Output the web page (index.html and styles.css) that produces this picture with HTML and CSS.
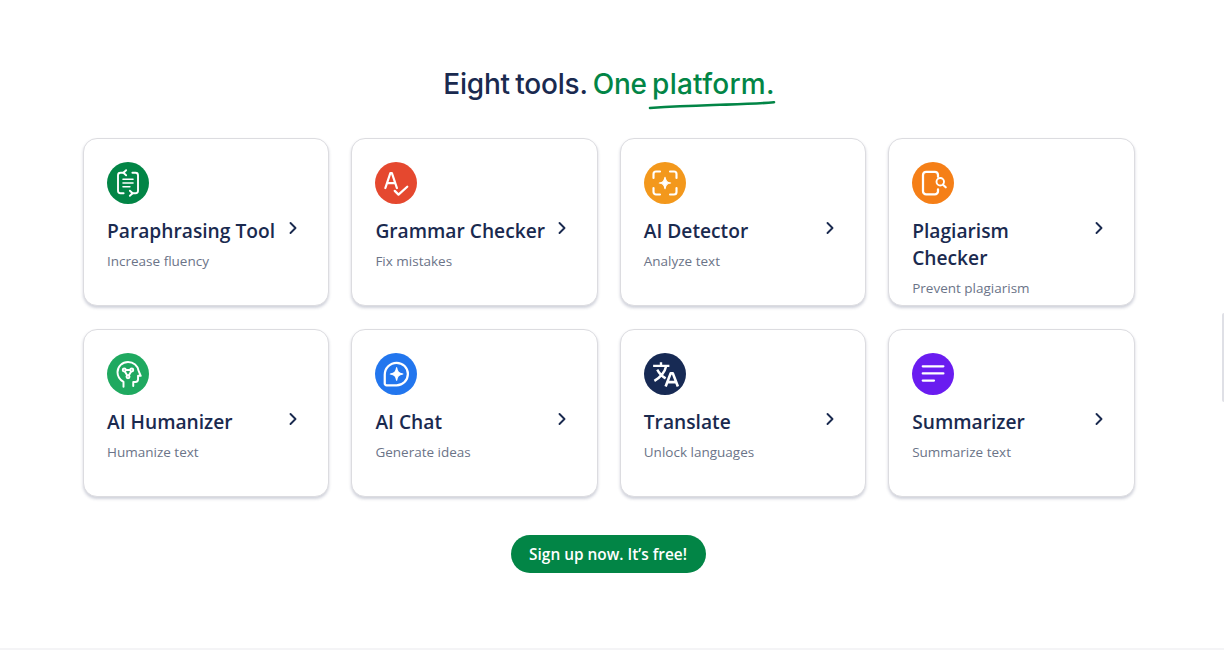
FILE: index.html
```html
<!DOCTYPE html>
<html lang="en">
<head>
    <meta charset="UTF-8">
    <meta name="viewport" content="width=device-width, initial-scale=1.0">
    <title>Eight tools. One platform.</title>
    <link rel="stylesheet" href="styles.css">
</head>
<body>

    <section class="tools-section">
        <h2 class="tools-heading">Eight tools. <span class="accent">One <span class="underlined">platform.<svg class="swoosh" viewBox="0 0 128 10" fill="none"><path d="M2 8C34 6 52 5.500 72 4.800C92 4.200 110 3.800 126 2.200" stroke="#028546" stroke-width="2.600" stroke-linecap="round"/></svg></span></span></h2>

        <div class="tools-grid">
            <a class="tool-card" href="#">
                <span class="tool-icon icon-green">
                    <svg viewBox="0 0 24 24" fill="none" stroke="#fff" stroke-width="1.500" stroke-linecap="round" stroke-linejoin="round"><path d="M9 3.800H6A2 2 0 0 0 4 5.800v12.400a2 2 0 0 0 2 2h2.500"/><path d="M15 20.200h3a2 2 0 0 0 2-2V5.800a2 2 0 0 0-2-2h-2.500"/><path d="M10.500 1.800 8.300 3.800l2.200 2M13.500 18.200l2.200 2-2.200 2"/><path d="M8 9h8M8 12h8M8 15h5.500" stroke-width="1.300"/></svg>
                </span>
                <div class="tool-title-row">
                    <h3 class="tool-title">Paraphrasing Tool</h3>
                    <svg class="chevron" viewBox="0 0 10 14" fill="none"><path d="M2.500 2 7.500 7l-5 5" stroke="#1a2a4f" stroke-width="1.900" stroke-linecap="round" stroke-linejoin="round"/></svg>
                </div>
                <p class="tool-sub">Increase fluency</p>
            </a>

            <a class="tool-card" href="#">
                <span class="tool-icon icon-red">
                    <svg viewBox="0 0 24 24" fill="none" stroke="#fff" stroke-width="1.800" stroke-linecap="round" stroke-linejoin="round"><path d="M3.500 16 7.500 4h1.200l4 12M5 12h6.200"/><path d="m11 18.300 3 3L21 15"/></svg>
                </span>
                <div class="tool-title-row">
                    <h3 class="tool-title">Grammar Checker</h3>
                    <svg class="chevron" viewBox="0 0 10 14" fill="none"><path d="M2.500 2 7.500 7l-5 5" stroke="#1a2a4f" stroke-width="1.900" stroke-linecap="round" stroke-linejoin="round"/></svg>
                </div>
                <p class="tool-sub">Fix mistakes</p>
            </a>

            <a class="tool-card" href="#">
                <span class="tool-icon icon-amber">
                    <svg viewBox="0 0 24 24" fill="none" stroke="#fff" stroke-width="1.700" stroke-linecap="round" stroke-linejoin="round"><path d="M8 2.800H4.800a2 2 0 0 0-2 2V8M16 2.800h3.200a2 2 0 0 1 2 2V8M8 21.200H4.800a2 2 0 0 1-2-2V16M16 21.200h3.200a2 2 0 0 0 2-2V16"/><path d="M12 7.500c.5 3 1.500 4 4.500 4.500-3 .5-4 1.500-4.500 4.500-.5-3-1.500-4-4.500-4.500 3-.5 4-1.500 4.500-4.500Z" fill="#fff" stroke-width="1"/></svg>
                </span>
                <div class="tool-title-row">
                    <h3 class="tool-title">AI Detector</h3>
                    <svg class="chevron" viewBox="0 0 10 14" fill="none"><path d="M2.500 2 7.500 7l-5 5" stroke="#1a2a4f" stroke-width="1.900" stroke-linecap="round" stroke-linejoin="round"/></svg>
                </div>
                <p class="tool-sub">Analyze text</p>
            </a>

            <a class="tool-card" href="#">
                <span class="tool-icon icon-orange">
                    <svg viewBox="0 0 24 24" fill="none" stroke="#fff" stroke-width="1.800" stroke-linecap="round" stroke-linejoin="round"><path d="M16 7V5.500a2.500 2.500 0 0 0-2.500-2.500h-7A2.500 2.500 0 0 0 4 5.500v13A2.500 2.500 0 0 0 6.500 21h7a2.500 2.500 0 0 0 2.500-2.500V17"/><circle cx="17.800" cy="11" r="3" stroke-width="1.500"/><path d="m20 13.400 2.200 2" stroke-width="1.700"/></svg>
                </span>
                <div class="tool-title-row">
                    <h3 class="tool-title">Plagiarism Checker</h3>
                    <svg class="chevron" viewBox="0 0 10 14" fill="none"><path d="M2.500 2 7.500 7l-5 5" stroke="#1a2a4f" stroke-width="1.900" stroke-linecap="round" stroke-linejoin="round"/></svg>
                </div>
                <p class="tool-sub">Prevent plagiarism</p>
            </a>

            <a class="tool-card" href="#">
                <span class="tool-icon icon-mint">
                    <svg viewBox="0 0 24 24" fill="none" stroke="#fff" stroke-width="1.300" stroke-linecap="round" stroke-linejoin="round"><g transform="translate(12 12) scale(1.200) translate(-12 -12)"><path d="M9 20.500v-3.200C6.600 15.800 5 13.500 5 10.800 5 6.800 8.300 4 12 4c3.700 0 6.600 2.500 7 5.800l1.500 3.400h-1.800v2.300c0 1-.8 1.800-1.800 1.800h-1.400v2.700"/><circle cx="9.500" cy="9.300" r="1"/><circle cx="14.500" cy="9.300" r="1"/><circle cx="12" cy="13.800" r="1"/><path d="M10.600 9.300h2.800M10 10.500l1.300 2.200M14 10.500l-1.300 2.200"/></g></svg>
                </span>
                <div class="tool-title-row">
                    <h3 class="tool-title">AI Humanizer</h3>
                    <svg class="chevron" viewBox="0 0 10 14" fill="none"><path d="M2.500 2 7.500 7l-5 5" stroke="#1a2a4f" stroke-width="1.900" stroke-linecap="round" stroke-linejoin="round"/></svg>
                </div>
                <p class="tool-sub">Humanize text</p>
            </a>

            <a class="tool-card" href="#">
                <span class="tool-icon icon-blue">
                    <svg viewBox="0 0 24 24" fill="none" stroke="#fff" stroke-width="1.800" stroke-linecap="round" stroke-linejoin="round"><path d="M12.500 3a9 9 0 1 1 0 18H4.500A1.500 1.500 0 0 1 3 19.500V12.500A9.500 9.500 0 0 1 12.500 3Z"/><path d="M12.500 7c.6 3.500 1.500 4.400 5 5-3.500.6-4.400 1.500-5 5-.6-3.500-1.500-4.400-5-5 3.500-.6 4.400-1.500 5-5Z" fill="#fff" stroke-width="1"/></svg>
                </span>
                <div class="tool-title-row">
                    <h3 class="tool-title">AI Chat</h3>
                    <svg class="chevron" viewBox="0 0 10 14" fill="none"><path d="M2.500 2 7.500 7l-5 5" stroke="#1a2a4f" stroke-width="1.900" stroke-linecap="round" stroke-linejoin="round"/></svg>
                </div>
                <p class="tool-sub">Generate ideas</p>
            </a>

            <a class="tool-card" href="#">
                <span class="tool-icon icon-navy">
                    <svg viewBox="0 0 24 24" fill="none" stroke="#fff" stroke-width="1.900" stroke-linejoin="round"><path d="M2.500 5.500h13M8.800 2.500v3M13 5.500C12 10 8.500 14.500 3.500 17.500M5.800 8.500c1.500 3 3.800 5.300 6.700 7"/><path d="m12.500 22 4-10.500h1.800l4 10.500M14 18.500h7" stroke-width="2.100"/></svg>
                </span>
                <div class="tool-title-row">
                    <h3 class="tool-title">Translate</h3>
                    <svg class="chevron" viewBox="0 0 10 14" fill="none"><path d="M2.500 2 7.500 7l-5 5" stroke="#1a2a4f" stroke-width="1.900" stroke-linecap="round" stroke-linejoin="round"/></svg>
                </div>
                <p class="tool-sub">Unlock languages</p>
            </a>

            <a class="tool-card" href="#">
                <span class="tool-icon icon-purple">
                    <svg viewBox="0 0 24 24" fill="none" stroke="#fff" stroke-width="1.800" stroke-linecap="round"><path d="M3.800 5.800h16.500M3.800 11.500h16.500M3.800 17.200h9"/></svg>
                </span>
                <div class="tool-title-row">
                    <h3 class="tool-title">Summarizer</h3>
                    <svg class="chevron" viewBox="0 0 10 14" fill="none"><path d="M2.500 2 7.500 7l-5 5" stroke="#1a2a4f" stroke-width="1.900" stroke-linecap="round" stroke-linejoin="round"/></svg>
                </div>
                <p class="tool-sub">Summarize text</p>
            </a>
        </div>

        <div class="cta-row">
            <a class="cta-button" href="#">Sign up now. It’s free!</a>
        </div>
    </section>

    <div class="feedback-tab"></div>

</body>
</html>
```

FILE: styles.css
```css
/* Basic Reset */
* {
    margin: 0;
    padding: 0;
    box-sizing: border-box;
}

body {
    font-family: 'Open Sans', 'Liberation Sans', sans-serif;
    background: #fff;
    color: #1a2a4f;
    height: 650px;
    overflow: hidden;
    position: relative;
}

a {
    color: inherit;
    text-decoration: none;
}

.tools-section {
    height: 650px;
    padding: 64px 89px 0 83px;
    border-bottom: 2px solid #f4f4f6;
}

.tools-heading {
    font-family: 'Inter', 'Liberation Sans', sans-serif;
    font-size: 28px;
    font-weight: 500;
    line-height: 40px;
    letter-spacing: -0.2px;
    word-spacing: -2px;
    text-align: center;
    color: #1a2a4f;
    margin-bottom: 34px;
}

.accent {
    color: #028546;
}

.underlined {
    position: relative;
    display: inline-block;
    letter-spacing: 0.25px;
}

.swoosh {
    position: absolute;
    left: -4px;
    bottom: -6px;
    width: 128px;
    height: 10px;
}

/* Cards */
.tools-grid {
    display: grid;
    grid-template-columns: repeat(4, 246.400px);
    grid-auto-rows: 168px;
    column-gap: 22px;
    row-gap: 23px;
}

.tool-card {
    display: block;
    background: #fff;
    border: 1px solid #dcdce0;
    border-radius: 14px;
    padding: 23px 23px 0;
    box-shadow: 0 2px 3px rgba(40, 50, 90, 0.22);
}

.tool-icon {
    display: flex;
    align-items: center;
    justify-content: center;
    width: 42px;
    height: 42px;
    border-radius: 50%;
    margin-bottom: 13px;
}

.tool-icon svg {
    width: 30px;
    height: 30px;
}

.icon-green { background: #028546; }
.icon-red { background: #e5482f; }
.icon-amber { background: #f3981c; }
.icon-orange { background: #f57f17; }
.icon-mint { background: #1fa960; }
.icon-blue { background: #2276ee; }
.icon-navy { background: #172a54; }
.icon-purple { background: #6a1cf0; }

.tool-title-row {
    display: flex;
    justify-content: space-between;
    align-items: flex-start;
    padding-right: 7px;
}

.tool-title {
    font-size: 19.200px;
    font-weight: 550;
    line-height: 27px;
    width: 172px;
    color: #1a2a4f;
}

.chevron {
    width: 10px;
    height: 14px;
    margin-top: 4px;
}

.tool-sub {
    font-size: 13.500px;
    line-height: 20px;
    margin-top: 7px;
    color: #6b7488;
}

.cta-row {
    display: flex;
    justify-content: center;
    margin-top: 38px;
    padding-right: 2px;
}

.cta-button {
    display: flex;
    align-items: center;
    justify-content: center;
    width: 195px;
    height: 38px;
    border-radius: 19px;
    background: #028546;
    color: #fff;
    font-size: 15.400px;
    font-weight: 550;
}

/* Sliver of the side tab at the window edge */
.feedback-tab {
    position: absolute;
    right: 0;
    top: 313px;
    width: 2px;
    height: 89px;
    background: #dfe0e6;
    border-radius: 2px 0 0 2px;
}
```
